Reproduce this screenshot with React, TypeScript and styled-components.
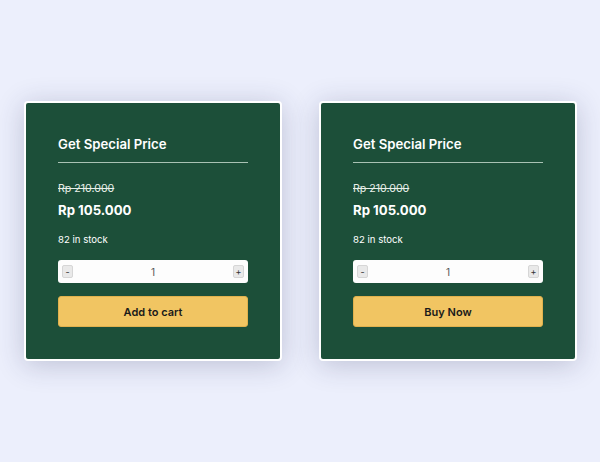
import React, { useState } from "react";
import styled, { createGlobalStyle } from "styled-components";

const GlobalStyle = createGlobalStyle`
  html, body { margin: 0; padding: 0; }
  body {
    background: #eceffc;
    font-family: Inter, "Noto Sans", sans-serif;
  }
  * { box-sizing: border-box; }
`;

const Page = styled.div`
  width: 600px;
  height: 462px;
  display: flex;
  align-items: center;
  justify-content: center;
  gap: 37px;
  padding-left: 1px;
`;

const Card = styled.div`
  width: 258px;
  height: 260px;
  background: #1c4f39;
  border: 2px solid #ffffff;
  border-radius: 4px;
  box-shadow: 0 4px 28px rgba(40, 44, 90, 0.24);
  padding: 31px 32px;
  display: flex;
  flex-direction: column;
  color: #ffffff;
`;

const Title = styled.h2`
  margin: 0;
  font-size: 13.2px;
  line-height: 20px;
  font-weight: 600;
  padding-bottom: 8px;
  border-bottom: 1px solid #a9c2b4;
`;

const OldPrice = styled.div`
  margin-top: 19px;
  font-size: 10.6px;
  line-height: 14px;
  text-decoration: line-through;
  color: #e8efe9;
`;

const Price = styled.div`
  margin-top: 5px;
  font-size: 13.2px;
  line-height: 18px;
  font-weight: 700;
`;

const Stock = styled.div`
  margin-top: 14px;
  font-size: 9.6px;
  line-height: 14px;
`;

const Qty = styled.div`
  margin-top: 13px;
  height: 23px;
  background: #fdfdfd;
  border-radius: 3px;
  display: flex;
  align-items: center;
  justify-content: space-between;
  padding: 0 4px;
`;

const QtyBtn = styled.button`
  width: 11px;
  height: 13px;
  padding: 0;
  border: 1px solid #d6d6d6;
  background: #e9e9e9;
  border-radius: 2px;
  font-family: Inter, sans-serif;
  font-size: 9px;
  line-height: 11px;
  color: #333;
  display: flex;
  align-items: center;
  justify-content: center;
`;

const QtyValue = styled.span`
  font-size: 10px;
  color: #555;
`;

const Action = styled.button`
  margin-top: 13px;
  height: 31px;
  flex-shrink: 0;
  width: 100%;
  background: #f1c562;
  border: 1px solid #e0b14d;
  border-radius: 3px;
  font-family: Inter, sans-serif;
  font-size: 11px;
  font-weight: 600;
  color: #1a1a1a;
`;

function ProductCard({ label }: { label: string }) {
  const [qty, setQty] = useState(1);
  return (
    <Card>
      <Title>Get Special Price</Title>
      <OldPrice>Rp 210.000</OldPrice>
      <Price>Rp 105.000</Price>
      <Stock>82 in stock</Stock>
      <Qty>
        <QtyBtn onClick={() => setQty(Math.max(1, qty - 1))}>-</QtyBtn>
        <QtyValue>{qty}</QtyValue>
        <QtyBtn onClick={() => setQty(qty + 1)}>+</QtyBtn>
      </Qty>
      <Action>{label}</Action>
    </Card>
  );
}

export default function App() {
  return (
    <>
      <GlobalStyle />
      <Page>
        <ProductCard label="Add to cart" />
        <ProductCard label="Buy Now" />
      </Page>
    </>
  );
}
